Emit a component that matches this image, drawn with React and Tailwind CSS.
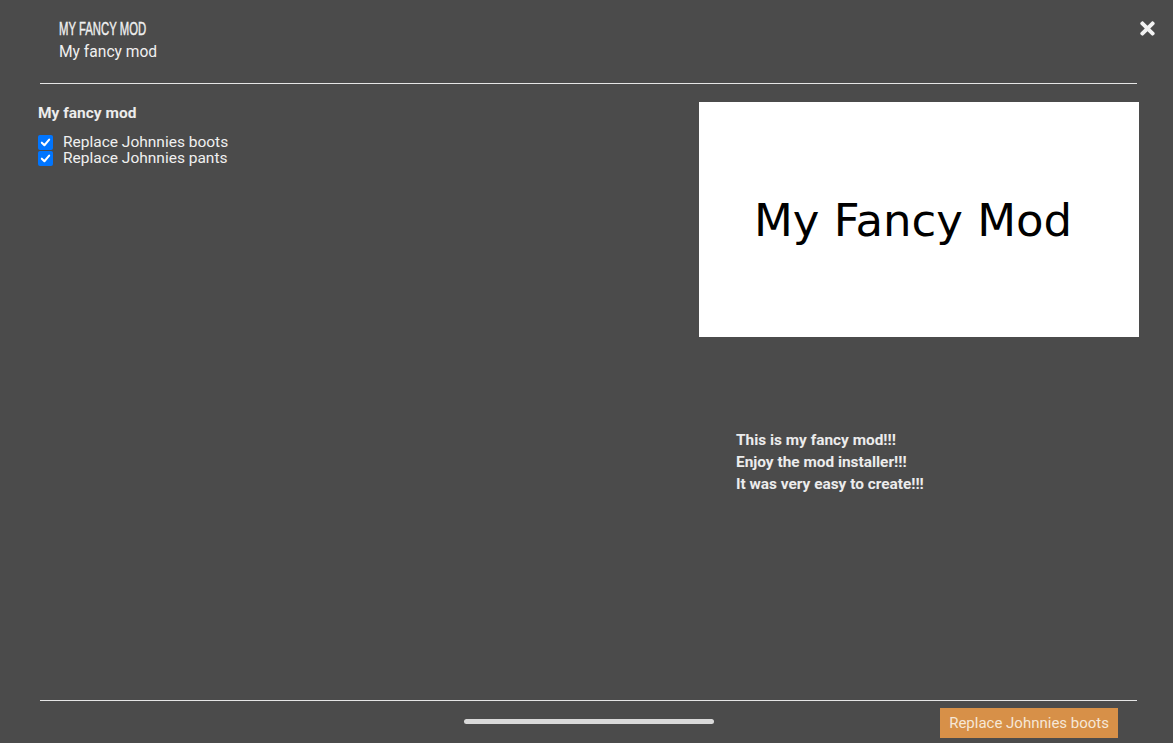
import React from 'react';
import { FaTimes } from 'react-icons/fa';

const options = [
  { id: 'boots', label: 'Replace Johnnies boots', checked: true },
  { id: 'pants', label: 'Replace Johnnies pants', checked: true },
];

const CheckBox = () => (
  <span className="w-[15px] h-[15px] bg-[#0075ff] rounded-[2px] flex items-center justify-center shrink-0">
    <svg width="11" height="11" viewBox="0 0 12 12">
      <path d="M2 6.2 L4.8 9 L10 2.8" fill="none" stroke="white" strokeWidth="2.2" strokeLinecap="round" strokeLinejoin="round" />
    </svg>
  </span>
);

const App = () => {
  return (
    <div className="w-[1173px] h-[743px] bg-[#4b4b4b] flex flex-col overflow-hidden" style={{ fontFamily: 'Roboto, "Liberation Sans", sans-serif' }}>
      {/* Header */}
      <div className="relative pl-[40px] pr-[36px]">
        <div className="pl-[19px] pt-[18px] h-[83px]">
          <div className="h-[22px] flex items-center">
            <span className="inline-block origin-left scale-x-[0.63] text-[#f0f0f0] text-[18px] leading-[20px] whitespace-nowrap [-webkit-text-stroke:0.4px_#f0f0f0]" style={{ fontFamily: '"Liberation Sans", sans-serif' }}>
              MY FANCY MOD
            </span>
          </div>
          <div className="text-[#f0f0f0] text-[15.6px] leading-[20px] mt-[2px]">My fancy mod</div>
        </div>
        <div className="h-px bg-[#e6e6e6]" />
        <button className="absolute right-[15px] top-[18px] text-[#f2f2f2]">
          <FaTimes size={21} />
        </button>
      </div>

      {/* Body */}
      <div className="flex-1 flex pl-[38px] pr-[34px] pt-[18px]">
        <div className="flex-1">
          <div className="text-[#ececec] text-[15.5px] font-bold leading-[22px] mb-[11px]">My fancy mod</div>
          <div className="flex flex-col">
            {options.map((o) => (
              <label key={o.id} className="flex items-center gap-[10px] h-[15.5px] text-[#f0f0f0] text-[15.5px] leading-[15px]">
                <CheckBox />
                <span>{o.label}</span>
              </label>
            ))}
          </div>
        </div>
        <div className="w-[440px] flex flex-col">
          <div className="h-[235px] bg-white flex items-center justify-center pr-[12px]">
            <span className="text-black text-[45px] leading-none pt-[2px]" style={{ fontFamily: '"DejaVu Sans", Verdana, sans-serif' }}>
              My Fancy Mod
            </span>
          </div>
          <div className="pl-[37px] pt-[92px] text-[#ececec] text-[15.4px] font-bold leading-[22px]">
            <div>This is my fancy mod!!!</div>
            <div>Enjoy the mod installer!!!</div>
            <div>It was very easy to create!!!</div>
          </div>
        </div>
      </div>

      {/* Footer */}
      <div className="pl-[40px] pr-[36px]">
        <div className="h-px bg-[#e6e6e6]" />
        <div className="h-[42px] flex items-center relative">
          <div className="absolute left-[424px] top-[18px] w-[250px] h-[5px] rounded-full bg-[#d9d9d9]" />
          <button className="ml-auto mr-[19px] mt-[2px] h-[30px] px-[9px] bg-[#d79048] text-[#f6e7d6] text-[15px]">
            Replace Johnnies boots
          </button>
        </div>
      </div>
    </div>
  );
};

export default App;
